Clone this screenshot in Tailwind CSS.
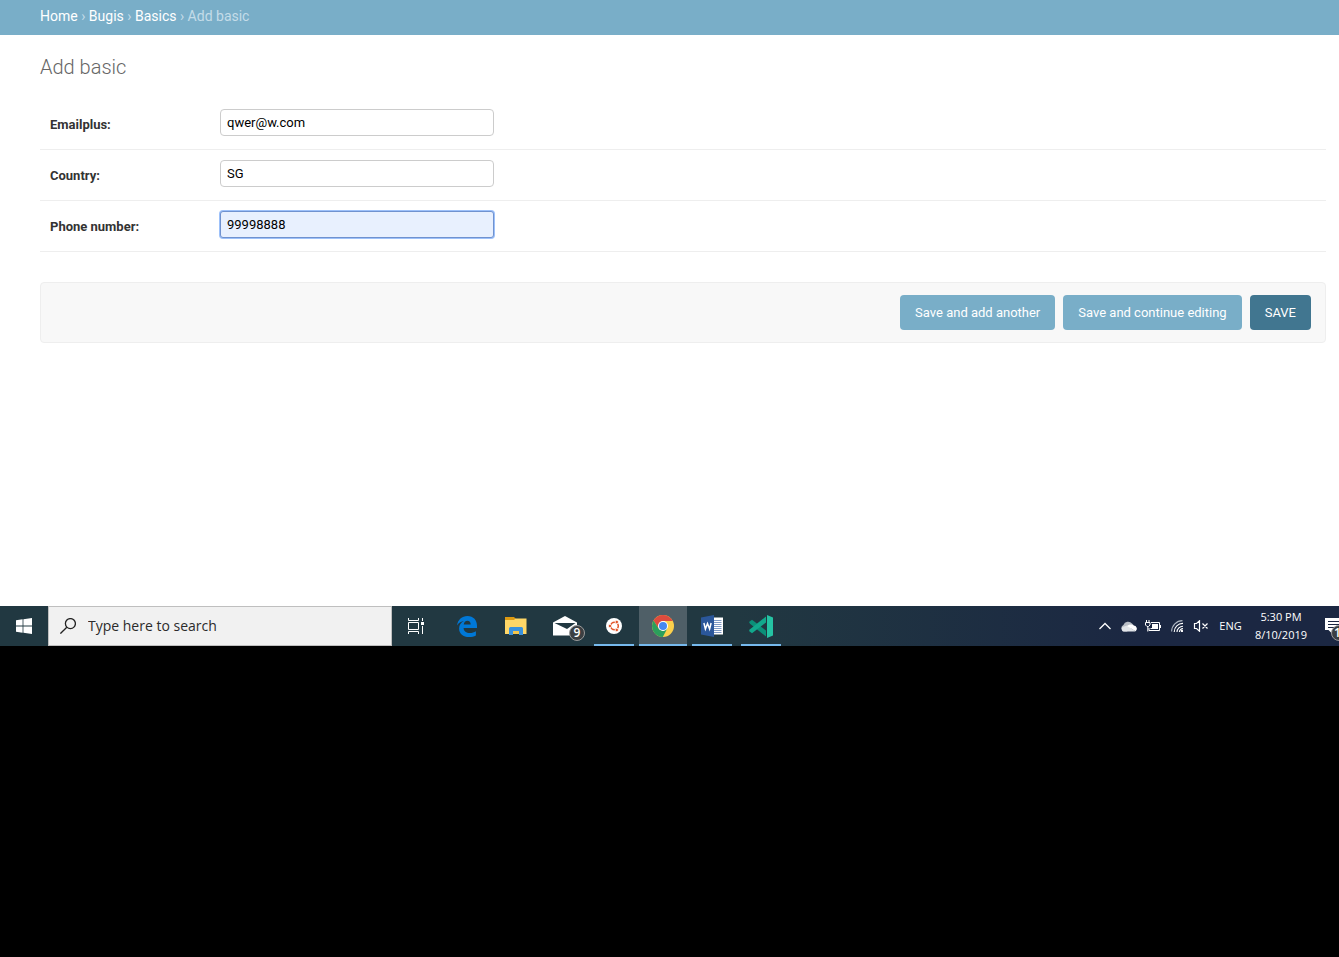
<!DOCTYPE html>
<html lang="en">
<head>
    <meta charset="UTF-8">
    <meta name="viewport" content="width=device-width, initial-scale=1.0">
    <title>Add basic</title>
    <script src="https://cdn.jsdelivr.net/npm/@tailwindcss/browser@4"></script>
</head>
<body class="bg-black min-h-screen overflow-x-hidden font-['Roboto',sans-serif] text-[13px] text-[#333]">
    <!-- Admin page -->
    <div class="bg-white pb-[263px]">
        <nav class="h-[35px] pl-10 pt-[6px] bg-[#79aec8] text-sm text-[#c4dce8]" aria-label="Breadcrumb">
            <a href="#" class="text-white">Home</a>
            ›
            <a href="#" class="text-white">Bugis</a>
            ›
            <a href="#" class="text-white">Basics</a>
            › Add basic
        </nav>

        <main class="pl-10 pr-[13px] pt-5">
            <h1 class="text-xl leading-6 font-light text-[#666] mb-5">Add basic</h1>

            <form>
                <div class="flex items-start border-b border-[#eee] px-[10px] pt-[10px] pb-[13px]">
                    <label for="emailplus" class="w-[170px] pt-[6px] leading-5 font-bold">Emailplus:</label>
                    <input id="emailplus" type="text" value="qwer@w.com" class="w-[274px] h-[27px] px-[6px] border border-[#ccc] rounded bg-white text-black outline-none">
                </div>
                <div class="flex items-start border-b border-[#eee] px-[10px] pt-[10px] pb-[13px]">
                    <label for="country" class="w-[170px] pt-[6px] leading-5 font-bold">Country:</label>
                    <input id="country" type="text" value="SG" class="w-[274px] h-[27px] px-[6px] border border-[#ccc] rounded bg-white text-black outline-none">
                </div>
                <div class="flex items-start border-b border-[#eee] px-[10px] pt-[10px] pb-[13px]">
                    <label for="phone" class="w-[170px] pt-[6px] leading-5 font-bold">Phone number:</label>
                    <input id="phone" type="text" value="99998888" class="w-[274px] h-[27px] px-[6px] border border-[#7092cf] rounded-[3px] ring-1 ring-[#9dc1fa] bg-[#e8f0fe] text-black outline-none">
                </div>

                <div class="mt-[30px] px-[14px] py-3 flex justify-end gap-2 bg-[#f8f8f8] border border-[#eee] rounded">
                    <button type="button" class="h-[35px] px-[15px] rounded bg-[#79aec8] text-white">Save and add another</button>
                    <button type="button" class="h-[35px] px-[15px] rounded bg-[#79aec8] text-white">Save and continue editing</button>
                    <button type="button" class="h-[35px] px-[15px] rounded bg-[#417690] text-white uppercase">Save</button>
                </div>
            </form>
        </main>
    </div>

    <!-- Taskbar -->
    <footer class="h-10 flex overflow-hidden bg-linear-to-r from-[#213841] from-55% to-[#1b2742] to-85% text-white font-['Open_Sans',sans-serif]">
        <button type="button" class="w-12 shrink-0 flex items-center justify-center" aria-label="Start">
            <svg class="w-4 h-4" viewBox="0 0 16 16" fill="#fff">
                <path d="M0 2.3L6.6 1.3V7.5H0zM7.4 1.2L16 0V7.5H7.4zM0 8.4H6.6V14.7L0 13.7zM7.4 8.4H16V16L7.4 14.8z"/>
            </svg>
        </button>

        <div class="w-[344px] shrink-0 flex items-center gap-3 pl-[11px] bg-[#f1f1f1] border border-[#bfbfbf] text-[#222]">
            <svg class="w-4 h-4 shrink-0" viewBox="0 0 16 16" fill="none" stroke="#222" stroke-width="1.3">
                <circle cx="10.4" cy="5.6" r="5"/>
                <path d="M6.8 9.2L.4 15.6"/>
            </svg>
            <input type="text" aria-label="Search" placeholder="Type here to search" class="w-full text-sm bg-transparent outline-none placeholder:text-[#2b2b2b]">
        </div>

        <button type="button" class="w-12 shrink-0 flex items-center justify-center" aria-label="Task view">
            <svg class="w-4 h-4" viewBox="0 0 16 16" fill="none" stroke="#fff">
                <path d="M.5 0V2.5H10.5V0M.5 16V13.5H10.5V16M.5 4.5H10.5V11.5H.5zM14.5 0V3M14.5 8V16"/>
                <path d="M13 4H16V7H13z" fill="#fff" stroke="none"/>
            </svg>
        </button>

        <div class="flex shrink-0 gap-px ml-[3px]">
            <button type="button" class="w-12 flex items-center justify-center" aria-label="Edge">
                <svg class="w-5 h-[21px]" viewBox="0 0 20 21">
                    <path d="M0 9.4C.8 3.8 5 0 10.4 0C16.5 0 20 4.3 20 9.7V12H6.6C6.7 15.5 9.4 17 12.7 17C15.1 17 17.2 16.3 18.9 15.2V19.5C17 20.5 14.7 21 12.2 21C6.1 21 2.1 17.7 2.1 12.4C2.1 9.2 4 6.3 7 5C4.3 5.3 1.8 6.7 0 9.4zM6.7 8.5H13.7C13.7 6.2 12.5 4.8 10.4 4.8C8.4 4.8 7 6.3 6.7 8.5z" fill="#0078d7"/>
                </svg>
            </button>
            <button type="button" class="w-12 flex items-center justify-center" aria-label="File Explorer">
                <svg class="w-[22px] h-[18px]" viewBox="0 0 22 18">
                    <path d="M0 0H9L10.5 1.5V3H0z" fill="#dc9a12"/>
                    <path d="M0 3H9L10.5 1.5H21.500V17H0z" fill="#ffd767"/>
                    <path d="M4 18V11.5Q4 10 5.5 10H16.5Q18 10 18 11.5V18H14V14H8V18z" fill="#3a92dd"/>
                    <path d="M8 14H14V17H8z" fill="#f5c64c"/>
                </svg>
            </button>
            <button type="button" class="relative w-12 flex items-center justify-center" aria-label="Mail">
                <svg class="w-6 h-5" viewBox="0 0 24 20">
                    <path d="M0 6.5L12 0L24 6.5V19.5H0z" fill="#fff"/>
                    <path d="M1.5 7H22.5L14 13z" fill="#213841"/>
                    <path d="M0 7L7.5 11L0 17.5z" fill="#fff"/>
                </svg>
                <span class="absolute left-7 top-[19px] w-4 h-4 rounded-full border border-[#9a9a9a] bg-[#3b3f42] text-xs leading-[14px] font-semibold text-center">9</span>
            </button>
            <button type="button" class="relative w-12 flex items-center justify-center" aria-label="Ubuntu">
                <svg class="w-4 h-4" viewBox="0 0 16 16">
                    <circle cx="8" cy="8" r="8" fill="#fff"/>
                    <circle cx="8.5" cy="8" r="3.8" fill="none" stroke="#e2562a" stroke-width="1.5"/>
                    <g stroke="#fff" stroke-width=".8">
                        <circle cx="3.9" cy="8" r="1.7" fill="#e2562a"/>
                        <circle cx="10.8" cy="4" r="1.7" fill="#e2562a"/>
                        <circle cx="10.8" cy="12" r="1.7" fill="#e2562a"/>
                    </g>
                </svg>
                <span class="absolute bottom-0 inset-x-1 h-[2px] bg-[#76b9ed]"></span>
            </button>
            <button type="button" class="relative w-12 flex items-center justify-center bg-[#4f5f67]" aria-label="Chrome">
                <svg class="w-[22px] h-[22px]" viewBox="0 0 22 22">
                    <circle cx="11" cy="11" r="11" fill="#fcd04b"/>
                    <path d="M1.5 5.5A11 11 0 0 1 20.5 5.5L20.7 6H11L6.7 13.5z" fill="#dd4b3e"/>
                    <path d="M1.5 5.5L6.7 13.5L11 16L15.3 13.5L10.8 22A11 11 0 0 1 1.5 5.5z" fill="#2b9f5c"/>
                    <circle cx="11" cy="11" r="5" fill="#fff"/>
                    <circle cx="11" cy="11" r="4" fill="#4688f1"/>
                </svg>
                <span class="absolute bottom-0 inset-x-0 h-[2px] bg-[#76b9ed]"></span>
            </button>
            <button type="button" class="relative w-12 flex items-center justify-center" aria-label="Word">
                <svg class="w-[22px] h-[22px]" viewBox="0 0 22 22">
                    <path d="M12 2.5H22V19.5H12z" fill="#fff"/>
                    <path d="M13 5.5H20.500M13 7.500H20.500M13 9.500H20.500M13 11.500H20.500M13 13.500H20.500M13 15.500H20.500M13 17.500H20.500" stroke="#6f8fc0" stroke-width=".9"/>
                    <path d="M0 2.5L13 0V22L0 19.5z" fill="#2b579a"/>
                    <path d="M2.9 8L4.4 14L6.5 8.5L8.6 14L10.1 8" fill="none" stroke="#fff" stroke-width="1.5"/>
                </svg>
                <span class="absolute bottom-0 inset-x-1 h-[2px] bg-[#76b9ed]"></span>
            </button>
            <button type="button" class="relative w-12 flex items-center justify-center" aria-label="Visual Studio Code">
                <svg class="w-6 h-[23px]" viewBox="0 0 24 23">
                    <path d="M0 7L3 4.800L17 15.500V21.500L1 8.800z" fill="#0b8f78"/>
                    <path d="M0 16L3 18.200L17 7.500V1.500L1 14.200z" fill="#12a88c"/>
                    <path d="M18 0L24 2.5V20.5L18 23z" fill="#25c3a3"/>
                </svg>
                <span class="absolute bottom-0 inset-x-1 h-[2px] bg-[#76b9ed]"></span>
            </button>
        </div>

        <!-- System tray -->
        <div class="ml-auto flex shrink-0 items-center text-[11px]">
            <button type="button" class="w-6 flex justify-center" aria-label="Show hidden icons">
                <svg class="w-3 h-2" viewBox="0 0 12 8" fill="none" stroke="#fff" stroke-width="1.3"><path d="M.5 7L6 1.500L11.5 7"/></svg>
            </button>
            <button type="button" class="w-6 flex justify-center" aria-label="OneDrive">
                <svg class="w-4 h-[11px]" viewBox="0 0 16 11">
                    <path d="M3.5 10.5A3.4 3.4 0 0 1 2.4 4A5 5 0 0 1 11 2.5L13 4.5L6 10.5z" fill="#b9bec6"/>
                    <path d="M2 10.5A3 3 0 0 1 1.5 6L6 4.5L14.5 10.3Q14 10.5 13 10.5z" fill="#e1e4e8"/>
                    <path d="M6 5Q10 2.5 12.5 4.5A3.2 3.2 0 0 1 14.5 10.3z" fill="#fff"/>
                </svg>
            </button>
            <button type="button" class="w-6 flex justify-center" aria-label="Battery">
                <svg class="w-4 h-3" viewBox="0 0 16 12" fill="none" stroke="#fff">
                    <path d="M6 2.5H14.5V10.5H4V8"/>
                    <path d="M7 4H13V9H5.5V8H7z" fill="#fff" stroke="none"/>
                    <path d="M15.5 5V8M1.5 0V2.5M4 0V2.5M.5 2.5H5V5L3.5 6.5H2L.5 5zM2.8 6.5V11.5"/>
                </svg>
            </button>
            <button type="button" class="w-6 flex justify-center" aria-label="Network">
                <svg class="w-3 h-3" viewBox="0 0 12 12" fill="none" stroke="#fff" stroke-width="1.1">
                    <path d="M.6 11.5A11 11 0 0 1 11.5.6" stroke="#aeb6c2"/>
                    <path d="M3.2 12A8.5 8.5 0 0 1 12 3.4M6 12A6 6 0 0 1 12 6.2M8.4 12A3.5 3.5 0 0 1 12 8.6"/>
                    <circle cx="11" cy="11" r="1.2" fill="#fff" stroke="none"/>
                </svg>
            </button>
            <button type="button" class="w-6 flex justify-center" aria-label="Volume muted">
                <svg class="w-4 h-3" viewBox="0 0 16 12" fill="none" stroke="#fff">
                    <path d="M1.5 3.5H3.500L6.500.8V11.2L3.500 8.5H1.5zM9.500 3.5L14.5 8.5M14.5 3.5L9.500 8.5" stroke-width="1.2"/>
                </svg>
            </button>
            <button type="button" class="w-[35px]">ENG</button>
            <button type="button" class="w-[66px] leading-[18px]">5:30 PM<br>8/10/2019</button>
            <button type="button" class="relative w-[14px] h-10 ml-[11px] overflow-hidden" aria-label="Notifications">
                <svg class="absolute left-0 top-3 w-4 h-4" viewBox="0 0 16 16">
                    <path d="M0 0H16V12H7V15.5L3.5 12H0z" fill="#fff"/>
                    <path d="M3 3.5H16M3 6.5H16M3 9.5H16" stroke="#1b2742"/>
                </svg>
                <span class="absolute left-[6px] top-[19px] w-4 h-4 pl-[2px] rounded-full border border-[#9a9a9a] bg-[#3b3f42] text-xs leading-[14px] font-semibold text-left">1</span>
            </button>
        </div>
    </footer>
</body>
</html>
